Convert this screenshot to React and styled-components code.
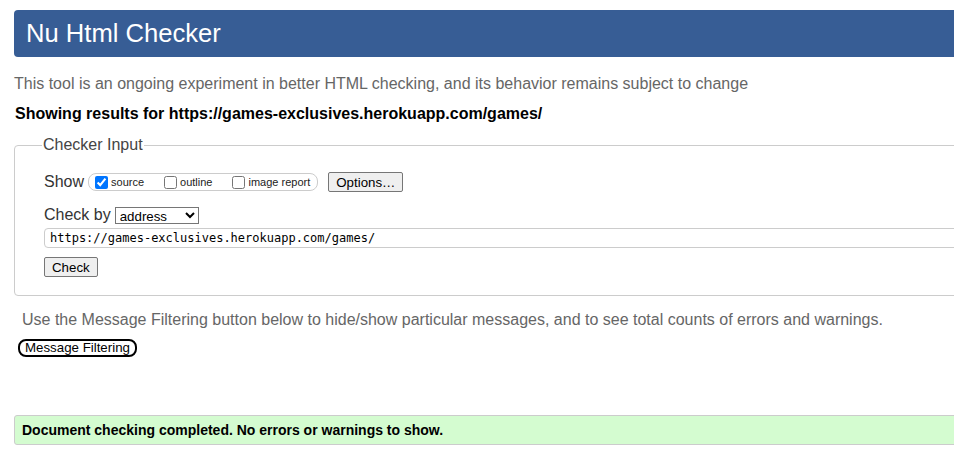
import styled, { createGlobalStyle } from 'styled-components'

const Global = createGlobalStyle`
    html, body {
        margin: 0;
        overflow: hidden;
        background: #fff;
    }
    body {
        font-family: "Liberation Sans", Arial, sans-serif;
        color: #000;
    }
`
const Page = styled.div`
    width: 1120px;
    padding: 10px 0 0 14px;
`
const Header = styled.h1`
    margin: 0;
    height: 47px;
    line-height: 46px;
    padding-left: 12px;
    background: #375d95;
    color: #fff;
    font-size: 25.6px;
    font-weight: normal;
    border-radius: 4px;
`
const Intro = styled.p`
    margin: 18px 0 0;
    font-size: 16px;
    line-height: 18px;
    color: #666;
`
const Results = styled.p`
    margin: 12px 0 0 1px;
    font-size: 16px;
    line-height: 18px;
    font-weight: bold;
`
const Box = styled.fieldset`
    margin: 13px 0 0;
    padding: 0 0 18px 29px;
    border: 1px solid #ccc;
    border-radius: 4px;
`
const Legend = styled.legend`
    margin-left: -2px;
    padding: 0 1px;
    font-size: 16px;
    line-height: 18px;
    color: #444;
`
const Row = styled.div`
    display: flex;
    align-items: center;
    margin-top: ${p => p.$top}px;
    font-size: 16px;
    color: #333;
`
const Group = styled.div`
    display: flex;
    align-items: center;
    height: 16px;
    margin-left: 4px;
    padding: 0 7px 0 6px;
    border: 1px solid #ccc;
    border-radius: 8px;
`
const Opt = styled.label`
    display: flex;
    align-items: center;
    font-size: 11px;
    color: #222;
    margin-right: ${p => p.$space}px;
    input {
        width: 13px;
        height: 13px;
        margin: 0 3px 0 0;
    }
`
const Button = styled.button`
    height: 20px;
    padding: 0 7px;
    font-family: "Liberation Sans", Arial, sans-serif;
    font-size: 13.3px;
    color: #000;
    background: #efefef;
    border: 1px solid #767676;
    border-radius: 2px;
    margin-left: ${p => p.$left || 0}px;
`
const Select = styled.select`
    width: 84px;
    height: 17px;
    margin-left: 4px;
    padding: 0;
    font-family: "Liberation Sans", Arial, sans-serif;
    font-size: 13.3px;
    border: 1px solid #767676;
    border-radius: 0;
    background: #fff;
`
const UrlInput = styled.input`
    display: block;
    box-sizing: border-box;
    width: 960px;
    height: 20px;
    margin-top: 4px;
    padding: 0 5px;
    font-family: "DejaVu Sans Mono", "Liberation Mono", monospace;
    font-size: 12px;
    color: #000;
    border: 1px solid #ccc;
    border-radius: 4px;
`
const Note = styled.p`
    margin: 15px 0 0 8px;
    font-size: 16px;
    line-height: 18px;
    color: #666;
`
const FilterButton = styled.button`
    display: block;
    height: 18px;
    margin: 10px 0 0 4px;
    padding: 0 5px;
    font-family: "Liberation Sans", Arial, sans-serif;
    font-size: 13.3px;
    line-height: 14px;
    color: #000;
    background: #fff;
    border: 2px solid #000;
    border-radius: 8px;
`
const Success = styled.p`
    margin: 58px 0 0;
    height: 28px;
    line-height: 28px;
    padding-left: 7px;
    font-size: 14px;
    font-weight: bold;
    background: #d4fcd0;
    border: 1px solid #ccc;
    border-radius: 3px;
`

export default function App() {
    const url = 'https://games-exclusives.herokuapp.com/games/'
    return (
        <Page>
            <Global />
            <Header>Nu Html Checker</Header>
            <Intro>This tool is an ongoing experiment in better HTML checking, and its behavior remains subject to change</Intro>
            <Results>Showing results for {url}</Results>
            <Box>
                <Legend>Checker Input</Legend>
                <Row $top={18}>
                    Show
                    <Group>
                        <Opt $space={20}><input type='checkbox' defaultChecked />source</Opt>
                        <Opt $space={20}><input type='checkbox' />outline</Opt>
                        <Opt $space={0}><input type='checkbox' />image report</Opt>
                    </Group>
                    <Button $left={10}>Options…</Button>
                </Row>
                <Row $top={14}>
                    Check by
                    <Select defaultValue='address'>
                        <option value='address'>address</option>
                        <option value='file'>file upload</option>
                        <option value='text'>text input</option>
                    </Select>
                </Row>
                <UrlInput type='url' defaultValue={url} />
                <Row $top={9}>
                    <Button>Check</Button>
                </Row>
            </Box>
            <Note>Use the Message Filtering button below to hide/show particular messages, and to see total counts of errors and warnings.</Note>
            <FilterButton>Message Filtering</FilterButton>
            <Success>Document checking completed. No errors or warnings to show.</Success>
        </Page>
    )
}
